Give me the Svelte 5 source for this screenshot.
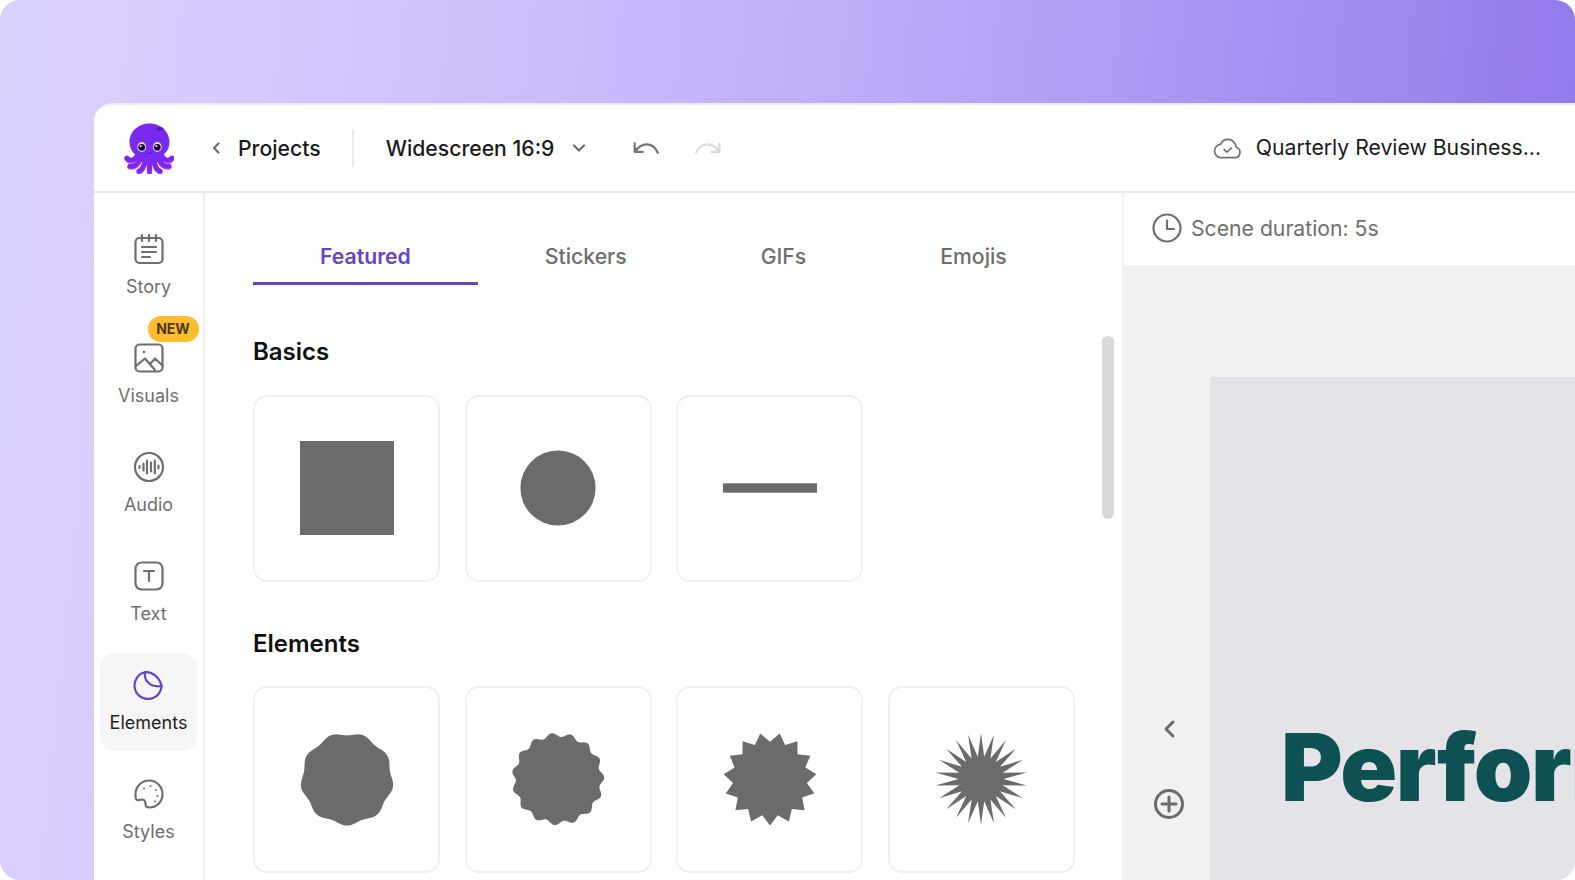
<script>
  const nav = [
    { id: 'story', label: 'Story' },
    { id: 'visuals', label: 'Visuals', badge: 'NEW' },
    { id: 'audio', label: 'Audio' },
    { id: 'text', label: 'Text' },
    { id: 'elements', label: 'Elements', active: true },
    { id: 'styles', label: 'Styles' }
  ];
  const tabs = ['Featured', 'Stickers', 'GIFs', 'Emojis'];

  function wavy(n, r, amp, rot, steps = 480) {
    const p = [];
    for (let i = 0; i < steps; i++) {
      const a = (i / steps) * Math.PI * 2;
      const rr = r + amp * Math.cos(n * (a + rot));
      p.push(`${(50 + rr * Math.sin(a)).toFixed(2)},${(50 - rr * Math.cos(a)).toFixed(2)}`);
    }
    return p.join(' ');
  }
  function star(n, outer, inner, rot) {
    const p = [];
    for (let i = 0; i < n * 2; i++) {
      const a = rot + (i / (n * 2)) * Math.PI * 2;
      const rr = i % 2 ? inner : outer;
      p.push(`${(50 + rr * Math.sin(a)).toFixed(2)},${(50 - rr * Math.cos(a)).toFixed(2)}`);
    }
    return p.join(' ');
  }
  const shapes = [
    wavy(9, 48, 1.6, Math.PI / 9),
    wavy(15, 47, 2.2, 0.14),
    star(15, 49.5, 39.5, 0.2094),
    star(22, 49, 24, 0)
  ];
</script>

<div class="stage">
  <div class="window">
    <header class="topbar">
      <svg class="logo" viewBox="0 0 50 52" aria-hidden="true">
        <g fill="none" stroke="#cf45ee" stroke-width="5.4" stroke-linecap="round" transform="translate(0 0.8)">
          <path d="M14 32c-2 6-8 8-11 4" />
          <path d="M37 32c2 6 8 8 11 4" />
          <path d="M16 37c-2 5-6 8-10 7" />
          <path d="M35 37c2 5 6 8 10 7" />
          <path d="M21 39c-1 5-3 9-6 10" />
          <path d="M30 39c1 5 3 9 6 10" />
          <path d="M25.5 40v9.500" />
        </g>
        <g fill="none" stroke="#7a2af0" stroke-width="4.8" stroke-linecap="round">
          <path d="M14 32c-2 6-8 8-11 4" />
          <path d="M37 32c2 6 8 8 11 4" />
          <path d="M16 37c-2 5-6 8-10 7" />
          <path d="M35 37c2 5 6 8 10 7" />
          <path d="M21 39c-1 5-3 9-6 10" />
          <path d="M30 39c1 5 3 9 6 10" />
          <path d="M25.5 40v9.500" />
        </g>
        <path fill="#7a2af0" d="M25.5 1.500c11 0 20 8 20 18.500 0 6-3 10-6 13-2 5-7 9-14 9s-12-4-14-9c-3-3-6-7-6-13C5.500 9.500 14.500 1.500 25.500 1.500z" />
        <ellipse cx="36" cy="7" rx="3.5" ry="2" fill="#5a18c0" />
        <ellipse cx="17.7" cy="25" rx="4.4" ry="5" fill="#e9d6ff" />
        <ellipse cx="33.3" cy="25" rx="4.4" ry="5" fill="#e9d6ff" />
        <circle cx="17.7" cy="25.300" r="3.4" fill="#160a30" />
        <circle cx="33.3" cy="25.300" r="3.4" fill="#160a30" />
        <circle cx="16.7" cy="24" r="1" fill="#fff" />
        <circle cx="32.3" cy="24" r="1" fill="#fff" />
        <path d="M23.5 31c1.300 1 2.700 1 4 0" fill="none" stroke="#3a1080" stroke-width="0.9" stroke-linecap="round" />
      </svg>

      <button class="back">
        <svg class="chev" viewBox="0 0 10 14"><path d="M7.500 2.500 3 7l4.500 4.500" /></svg>
        <span>Projects</span>
      </button>
      <span class="vsep"></span>
      <button class="format">
        <span>Widescreen 16:9</span>
        <svg class="caret" viewBox="0 0 14 10"><path d="M2 2.500 7 7.500 12 2.500" /></svg>
      </button>
      <div class="history">
        <svg viewBox="0 0 30 18"><path d="M2.500 2.500v9H11M3 11C6 6.500 10.500 3.500 15 3.500c5 0 9.500 3 12 9" /></svg>
        <svg class="off" viewBox="0 0 30 18"><path d="M27.500 2.500v9H19M27 11C24 6.500 19.500 3.500 15 3.500c-5 0-9.500 3-12 9" /></svg>
      </div>
      <div class="doc">
        <svg viewBox="0 0 30 24"><path d="M8 21.500h14.500a5.500 5.500 0 0 0 1.500-10.800C23.500 6 20 2.500 15.500 2.500c-3.500 0-6.300 2-7.500 5C4.500 8.300 1.500 11 1.500 14.500c0 4 3 7 6.500 7z" /><path d="m11.500 13 2.800 2.800 4.700-4.300" /></svg>
        <span>Quarterly Review Business...</span>
      </div>
    </header>

    <div class="body">
      <nav class="rail">
        {#each nav as item}
          <button class="navitem" class:active={item.active}>
            {#if item.badge}<span class="badge">{item.badge}</span>{/if}
            <svg viewBox="0 0 32 32">
              {#if item.id === 'story'}
                <rect x="2.500" y="5" width="27" height="25" rx="4" />
                <path d="M9 2v6M16 2v6M23 2v6M9 14h14M9 19h14M9 24h8" />
              {:else if item.id === 'visuals'}
                <rect x="2.500" y="2.500" width="27" height="27" rx="4" />
                <circle cx="11" cy="10" r="1.300" class="dot" />
                <path d="M3 24 12 16.500l10 11.500M17 22l5-5.500 7.500 7" />
              {:else if item.id === 'audio'}
                <circle cx="16" cy="16" r="14" />
                <path d="M6.500 15v2M10.500 12.500v7M14 9.500v13M18 11.500v9M21.800 9.500v13M25.500 14.500v3" />
              {:else if item.id === 'text'}
                <rect x="2.500" y="2.500" width="27" height="27" rx="6" />
                <path d="M11 11h10M16 11v10" />
              {:else if item.id === 'elements'}
                <path d="M12 3.300A13.500 13.500 0 1 0 28.500 17" />
                <path d="M12 3.300C10.500 11 17 19 28.500 17" />
                <path d="M12 3.300C19 2 27 9 28.500 17" />
              {:else}
                <path d="M16 2.500c7.500 0 13.500 6 13.500 13.500S24 29.500 16.500 29.500c-3 0-4-1.500-4-3.500 0-3-1-4.500-3.500-4.500-2 0-3 1-5 .5-1.500-.5-1.500-3.500-1.500-5.500C2.500 8.500 8.500 2.500 16 2.500z" />
                <circle cx="11" cy="10.500" r="1" class="dot" /><circle cx="17.500" cy="8" r="1" class="dot" /><circle cx="23" cy="12" r="1" class="dot" /><circle cx="24.500" cy="18" r="1" class="dot" /><circle cx="22" cy="23.500" r="1" class="dot" />
              {/if}
            </svg>
            <span>{item.label}</span>
          </button>
        {/each}
      </nav>

      <section class="panel">
        <div class="tabs">
          {#each tabs as t, i}
            <button class="tab" class:on={i === 0}>{t}</button>
          {/each}
        </div>
        <h2 class="basics">Basics</h2>
        <div class="grid">
          <div class="card"><svg class="big" viewBox="0 0 100 100"><rect width="100" height="100" /></svg></div>
          <div class="card"><svg class="big" viewBox="0 0 100 100"><circle cx="50" cy="50" r="40" /></svg></div>
          <div class="card"><svg class="big" viewBox="0 0 100 100"><rect y="45" width="100" height="10" /></svg></div>
        </div>
        <h2 class="elements">Elements</h2>
        <div class="grid">
          {#each shapes as pts}
            <div class="card"><svg class="big" viewBox="0 0 100 100"><polygon points={pts} /></svg></div>
          {/each}
        </div>
        <span class="thumb"></span>
      </section>

      <section class="preview">
        <div class="duration">
          <svg viewBox="0 0 30 30"><circle cx="15" cy="15" r="13.500" /><path d="M15 7.500V16h7" /></svg>
          <span>Scene duration: 5s</span>
        </div>
        <div class="workspace">
          <div class="tools">
            <svg class="t1" viewBox="0 0 14 20"><path d="M11 3 4 10l7 7" /></svg>
            <svg class="t2" viewBox="0 0 30 30"><circle cx="15" cy="15" r="13.500" /><path d="M15 8v14M8 15h14" /></svg>
          </div>
          <div class="canvas">
            <div class="headline">Performance</div>
          </div>
        </div>
      </section>
    </div>
  </div>
</div>

<style>
  :global(body) {
    margin: 0;
    background: #fff;
    overflow: hidden;
  }
  button {
    border: 0;
    background: none;
    padding: 0;
    font: inherit;
    color: inherit;
  }
  .stage {
    box-sizing: border-box;
    width: 1575px;
    height: 880px;
    padding: 103px 0 0 94px;
    overflow: hidden;
    border-radius: 20px;
    background: linear-gradient(96deg, #dcd2fe 0%, #d0c3fb 25%, #c0aef8 50%, #a893f2 75%, #8e74e8 100%);
    font-family: Inter, "Noto Sans", sans-serif;
    color: #1a1a1a;
  }
  .window {
    display: flex;
    flex-direction: column;
    height: 777px;
    background: #fff;
    border-top: 2px solid #eeeaf7;
    border-top-left-radius: 18px;
    box-sizing: border-box;
    overflow: hidden;
  }
  .topbar {
    flex: none;
    height: 86px;
    display: flex;
    align-items: center;
    padding-left: 30px;
    border-bottom: 2px solid #e9e9ea;
  }
  .logo {
    width: 50px;
    height: 52px;
    flex: none;
  }
  .back {
    display: flex;
    align-items: center;
    gap: 17px;
    margin-left: 37px;
    font-size: 21.2px;
    font-weight: 500;
  }
  .chev {
    width: 10px;
    height: 14px;
    fill: none;
    stroke: #6b6b6b;
    stroke-width: 2.2;
    stroke-linecap: round;
    stroke-linejoin: round;
  }
  .vsep {
    width: 2px;
    height: 37px;
    margin-left: 31px;
    background: #e9e9ea;
  }
  .format {
    display: flex;
    align-items: center;
    gap: 18px;
    margin-left: 32px;
    font-size: 21.2px;
    font-weight: 500;
  }
  .caret {
    width: 14px;
    height: 10px;
    fill: none;
    stroke: #6b6b6b;
    stroke-width: 2.2;
    stroke-linecap: round;
    stroke-linejoin: round;
  }
  .history {
    display: flex;
    gap: 32px;
    margin-left: 46px;
    padding-top: 2px;
  }
  .history svg {
    width: 29px;
    height: 17px;
    fill: none;
    stroke: #757575;
    stroke-width: 2.4;
    stroke-linecap: round;
    stroke-linejoin: round;
  }
  .history .off {
    stroke: #dcdcdc;
  }
  .doc {
    display: flex;
    align-items: center;
    gap: 14px;
    margin-left: auto;
    margin-right: 34px;
    margin-top: -3px;
    font-size: 21.2px;
  }
  .doc svg {
    width: 29px;
    height: 23px;
    margin-top: 3px;
    fill: none;
    stroke: #6f6f6f;
    stroke-width: 1.8;
    stroke-linecap: round;
    stroke-linejoin: round;
  }
  .body {
    flex: 1;
    min-height: 0;
    display: flex;
  }
  .rail {
    flex: none;
    width: 111px;
    box-sizing: border-box;
    padding: 24px 0 0 6px;
    border-right: 2px solid #efeff0;
    display: flex;
    flex-direction: column;
    gap: 11px;
  }
  .navitem {
    position: relative;
    width: 97px;
    height: 98px;
    box-sizing: border-box;
    padding-bottom: 3px;
    flex: none;
    display: flex;
    flex-direction: column;
    align-items: center;
    justify-content: center;
    gap: 11px;
    border-radius: 14px;
    font-size: 18px;
    color: #6e6e6e;
  }
  .navitem svg {
    width: 32px;
    height: 32px;
    fill: none;
    stroke: #6e6e6e;
    stroke-width: 2.2;
    stroke-linecap: round;
    stroke-linejoin: round;
  }
  .navitem .dot {
    fill: #6e6e6e;
    stroke: none;
  }
  .navitem.active {
    background: #f6f6f7;
    color: #1e1e1e;
  }
  .navitem.active svg {
    stroke: #6644c4;
  }
  .badge {
    position: absolute;
    top: -10px;
    left: 47.5px;
    width: 51px;
    height: 26px;
    border-radius: 13px;
    background: #fdbd2f;
    color: #4a3a10;
    font-size: 14px;
    font-weight: 700;
    line-height: 26px;
    text-align: center;
  }
  .panel {
    position: relative;
    flex: none;
    width: 917px;
    box-sizing: border-box;
    padding-left: 48px;
    overflow: hidden;
  }
  .tabs {
    display: flex;
    width: 820px;
    margin-top: 36px;
  }
  .tab {
    flex: 1 0 auto;
    padding: 0 67px;
    height: 56px;
    font-size: 21.2px;
    font-weight: 500;
    color: #6e6e6e;
    border-bottom: 3px solid transparent;
    box-sizing: border-box;
  }
  .tab.on {
    color: #6644c4;
    border-bottom-color: #6644c4;
    font-weight: 600;
  }
  h2 {
    margin: 0;
    font-size: 24px;
    font-weight: 600;
    color: #0f0f0f;
    line-height: 30px;
  }
  .basics {
    margin-top: 52px;
    margin-bottom: 28px;
  }
  .elements {
    margin-top: 47px;
    margin-bottom: 27px;
  }
  .grid {
    display: flex;
    gap: 24.5px;
  }
  .card {
    flex: none;
    width: 187px;
    height: 187px;
    box-sizing: border-box;
    padding-bottom: 2px;
    display: flex;
    align-items: center;
    justify-content: center;
    border: 2px solid #f0f0f1;
    border-radius: 14px;
    background: #fff;
  }
  .big {
    width: 94px;
    height: 94px;
    fill: #6b6b6b;
  }
  .thumb {
    position: absolute;
    top: 143px;
    left: 897px;
    width: 12px;
    height: 183px;
    border-radius: 6px;
    background: #d8d8d9;
  }
  .preview {
    flex: 1;
    min-width: 0;
    display: flex;
    flex-direction: column;
    border-left: 2px solid #efeff0;
  }
  .duration {
    flex: none;
    height: 72px;
    box-sizing: border-box;
    padding: 0 0 2px 28px;
    display: flex;
    align-items: center;
    gap: 9px;
    font-size: 21.2px;
    color: #6e6e6e;
  }
  .duration svg {
    width: 30px;
    height: 30px;
    fill: none;
    stroke: #6e6e6e;
    stroke-width: 2.2;
    stroke-linecap: round;
    stroke-linejoin: round;
  }
  .workspace {
    flex: 1;
    display: flex;
    background: #f1f1f2;
    padding-top: 112px;
  }
  .tools {
    flex: none;
    width: 86px;
    box-sizing: border-box;
    padding: 342px 0 0 3px;
    display: flex;
    flex-direction: column;
    align-items: center;
  }
  .tools svg {
    fill: none;
    stroke: #6b6b6b;
    stroke-linecap: round;
    stroke-linejoin: round;
  }
  .t1 {
    width: 14px;
    height: 20px;
    stroke-width: 3;
  }
  .t2 {
    width: 30px;
    height: 30px;
    margin-top: 50px;
    stroke-width: 3;
  }
  .canvas {
    flex: 1;
    min-width: 0;
    background: #e3e3e8;
    overflow: hidden;
    padding: 342px 0 0 71px;
  }
  .headline {
    font-size: 94px;
    font-weight: 900;
    line-height: 96px;
    color: #0e5153;
    white-space: nowrap;
    letter-spacing: -1.5px;
  }
</style>
